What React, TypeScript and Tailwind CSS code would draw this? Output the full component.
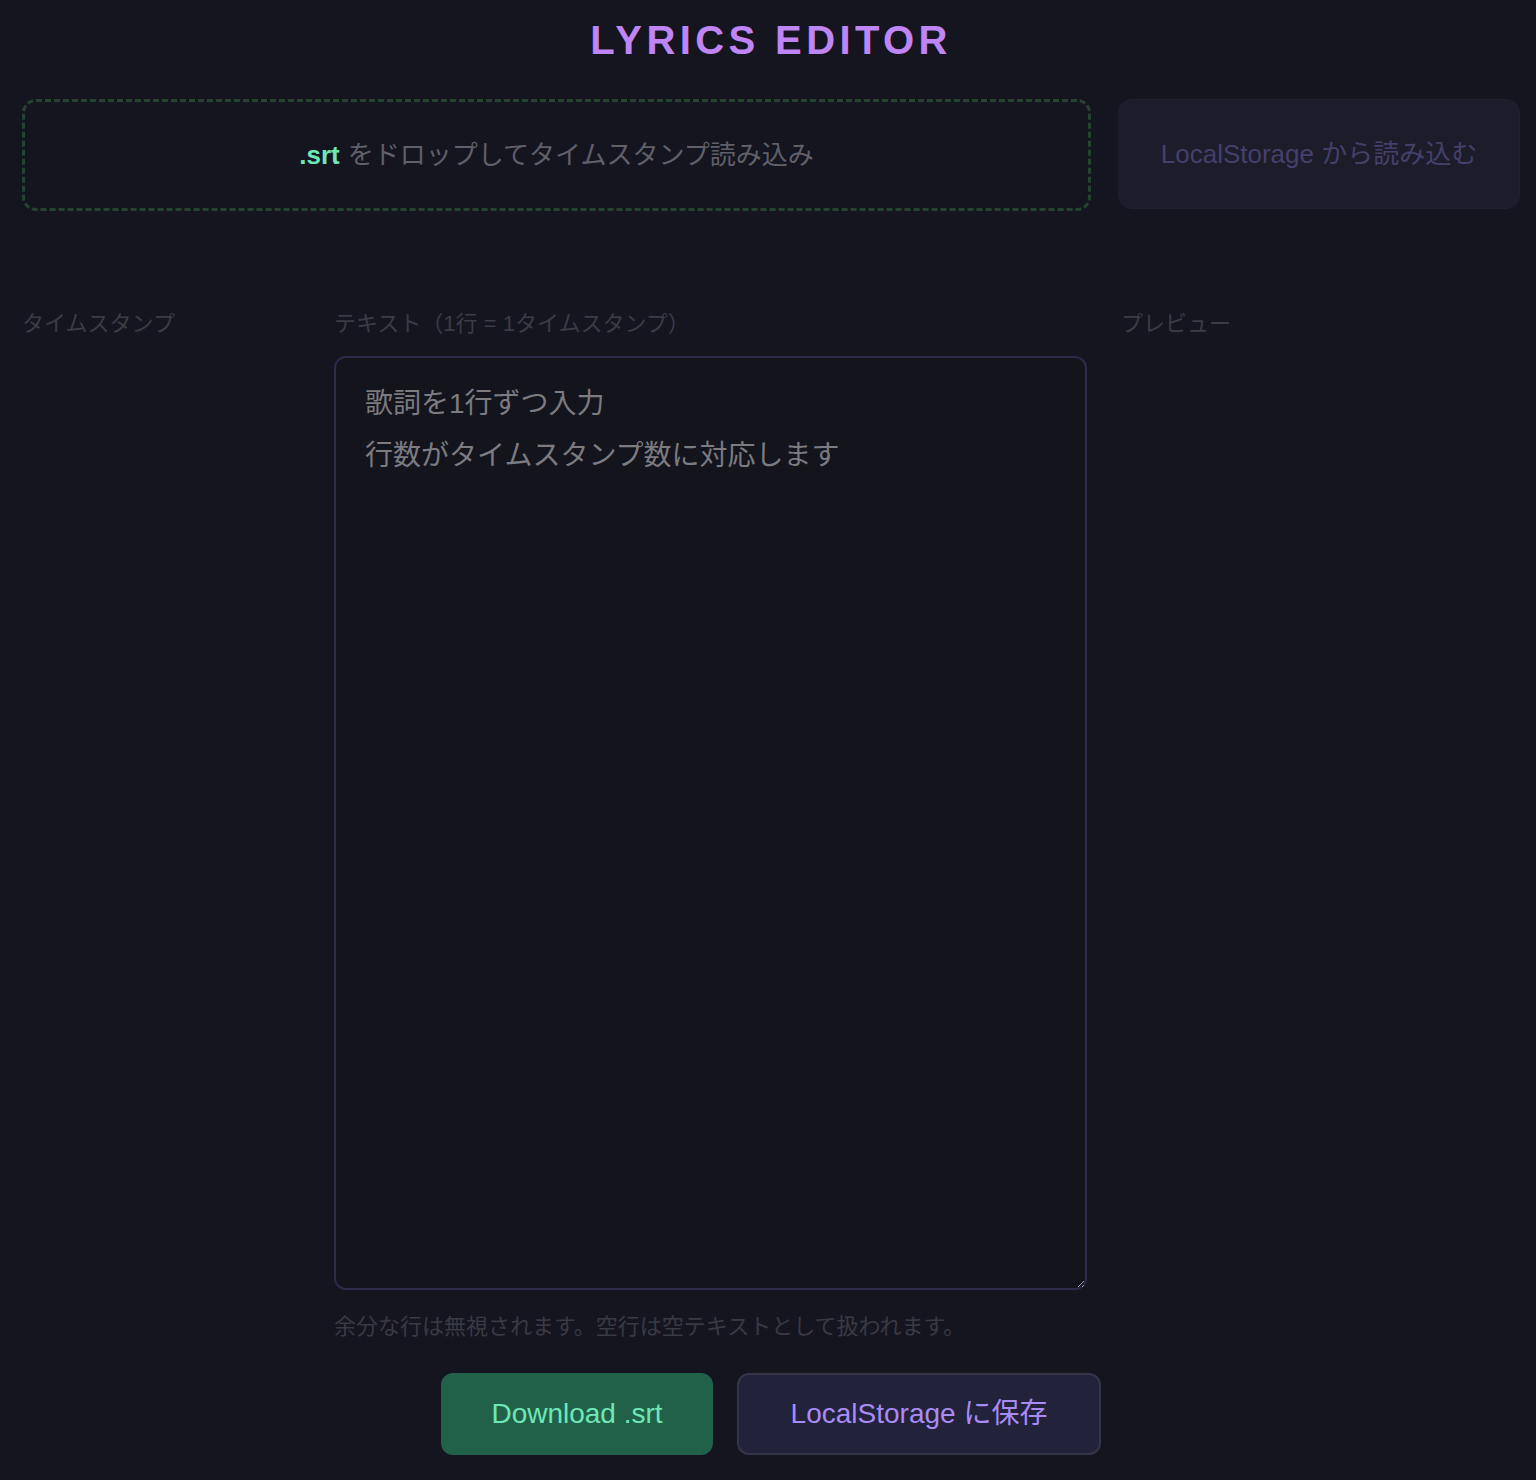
export default function App() {
  const f = { fontFamily: '"Liberation Sans", "Noto Sans CJK JP", sans-serif' };
  return (
    <div style={f} className="min-h-[1480px] bg-[#151520] pl-[22px] pr-[16px] pt-[16px] pb-6 text-[#888]">
      <h1 className="text-center text-[40px] font-bold tracking-[0.11em] text-[#bf85f5] leading-[48px]">LYRICS EDITOR</h1>
      <div className="mt-[35px] flex gap-[27px]">
        <div className="flex h-[112px] flex-1 items-center justify-center rounded-[14px] border-[3px] border-dashed border-[#25432f] text-[26px] text-[#606068]">
          <span className="font-bold text-[#6ee7b7] mr-[8px]">.srt</span>をドロップしてタイムスタンプ読み込み
        </div>
        <div className="flex h-[110px] w-[402px] items-center justify-center rounded-[14px] border border-[#202030] bg-[#1c1c2a] text-[26px] text-[#45406b]">
          LocalStorage から読み込む
        </div>
      </div>
      <div className="mt-[96px] grid grid-cols-[288px_753px_1fr] gap-x-[24px]">
        <div className="text-[22px] text-[#3c3c44]">タイムスタンプ</div>
        <div>
          <div className="text-[22px] text-[#3c3c44]">テキスト（1行 = 1タイムスタンプ）</div>
          <textarea
            style={f}
            placeholder={"歌詞を1行ずつ入力\n行数がタイムスタンプ数に対応します"}
            className="mt-[16px] block h-[934px] w-full resize-y rounded-[12px] border-2 border-[#2d2a4a] bg-[#14141d] px-[29px] py-[20px] text-[28px] leading-[52px] text-[#ccc] placeholder:text-[#7b7b80] outline-none"
          />
          <div className="mt-[20px] text-[22px] text-[#3a3a42]">余分な行は無視されます。空行は空テキストとして扱われます。</div>
        </div>
        <div className="pl-[10px] text-[22px] text-[#3c3c44]">プレビュー</div>
      </div>
      <div className="mt-[30px] flex justify-center gap-[24px]">
        <button style={f} className="h-[82px] w-[272px] rounded-[12px] bg-[#21614a] text-[28px] text-[#6ee7b7]">Download .srt</button>
        <button style={f} className="h-[82px] w-[364px] rounded-[12px] border-2 border-[#35354a] bg-[#22223a] text-[28px] text-[#a98bf5]">LocalStorage に保存</button>
      </div>
    </div>
  );
}
